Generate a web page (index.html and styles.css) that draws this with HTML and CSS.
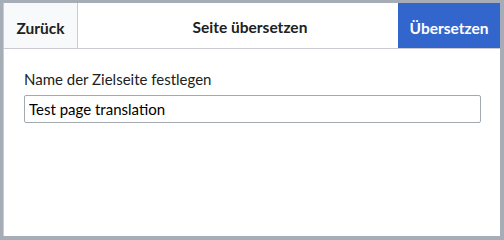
FILE: index.html
```html
<!DOCTYPE html>
<html lang="de">
<head>
<meta charset="utf-8">
<link rel="stylesheet" href="styles.css">
</head>
<body>
<div class="dialog">
  <div class="head">
    <button class="back">Zurück</button>
    <div class="title">Seite übersetzen</div>
    <button class="go">Übersetzen</button>
  </div>
  <div class="body">
    <label class="label" for="t">Name der Zielseite festlegen</label>
    <input id="t" class="input" type="text" value="Test page translation">
  </div>
</div>
</body>
</html>
```
FILE: styles.css
```css
html, body { margin: 0; padding: 0; }
body {
  width: 504px; height: 240px;
  background: #a6adb6;
  font-family: Lato, "Noto Sans", sans-serif;
  color: #202122;
  box-sizing: border-box;
  padding: 3px 4px 4px 3px;
}
.dialog {
  background: #fff;
  height: 233px;
  box-sizing: border-box;
  border-left: 1px solid #c8ccd1;
  display: flex;
  flex-direction: column;
}
.head {
  display: flex;
  align-items: stretch;
  height: 45px;
  border-bottom: 1px solid #c8ccd1;
}
.back {
  width: 74px;
  background: #f8f9fa;
  border: 0;
  border-right: 1px solid #c8ccd1;
  font: bold 15.5px Lato, sans-serif;
  color: #202122;
  padding: 4px 0 0 0;
}
.title {
  flex: 1;
  display: flex;
  align-items: center;
  justify-content: center;
  font-weight: bold;
  font-size: 15.5px;
  padding-top: 3px;
  padding-left: 24px;
}
.go {
  width: 102px;
  background: #3366cc;
  color: #fff;
  border: 0;
  font: bold 15.5px Lato, sans-serif;
  padding: 4px 0 0 0;
}
.body {
  padding: 21px 19px 0 20px;
  display: flex;
  flex-direction: column;
}
.label {
  font-size: 15px;
  line-height: 19px;
  margin-bottom: 6px;
  color: #202122;
}
.input {
  height: 28px;
  box-sizing: border-box;
  border: 1px solid #a2a9b1;
  border-radius: 2px;
  font: 15px Lato, sans-serif;
  color: #000;
  padding: 0 4px;
  margin: 0;
}
```
